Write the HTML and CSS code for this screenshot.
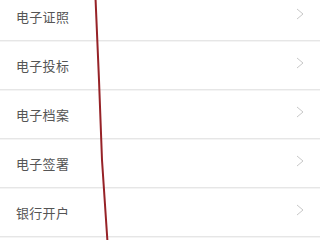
FILE: index.html
```html
<!DOCTYPE html>
<html lang="zh">
<head>
<meta charset="utf-8">
<link rel="stylesheet" href="styles.css">
</head>
<body>
<div class="screen">
  <ul class="menu">
    <li class="row"><span class="label">电子证照</span><svg class="chev" viewBox="0 0 8 12"><polyline points="1,1 7,6 1,11"/></svg></li>
    <li class="row"><span class="label">电子投标</span><svg class="chev" viewBox="0 0 8 12"><polyline points="1,1 7,6 1,11"/></svg></li>
    <li class="row"><span class="label">电子档案</span><svg class="chev" viewBox="0 0 8 12"><polyline points="1,1 7,6 1,11"/></svg></li>
    <li class="row"><span class="label">电子签署</span><svg class="chev" viewBox="0 0 8 12"><polyline points="1,1 7,6 1,11"/></svg></li>
    <li class="row"><span class="label">银行开户</span><svg class="chev" viewBox="0 0 8 12"><polyline points="1,1 7,6 1,11"/></svg></li>
  </ul>
  <svg class="stroke" viewBox="0 0 320 240"><path d="M95.5,-2 L99,80 L102,160 L107.5,242"/></svg>
</div>
</body>
</html>
```
FILE: styles.css
```css
html, body {
  margin: 0;
  padding: 0;
  background: #ffffff;
}
.screen {
  position: relative;
  width: 320px;
  height: 240px;
  overflow: hidden;
  font-family: "Noto Sans CJK SC", "Noto Sans", sans-serif;
}
.menu {
  list-style: none;
  margin: -8px 0 0 0;
  padding: 0;
}
.row {
  display: flex;
  align-items: center;
  justify-content: space-between;
  height: 48px;
  padding: 0 16px 0 16px;
  border-bottom: 1px solid #e6e6e6;
  box-shadow: 0 1px 0 #f4f4f4;
}
.label {
  font-size: 13px;
  color: #555555;
  letter-spacing: 0.3px;
}
.chev {
  width: 8px;
  height: 12px;
  margin-top: -4px;
}
.chev polyline {
  fill: none;
  stroke: #c8c8c8;
  stroke-width: 1;
}
.stroke {
  position: absolute;
  left: 0;
  top: 0;
  width: 320px;
  height: 240px;
}
.stroke path {
  fill: none;
  stroke: #962227;
  stroke-width: 2;
}
```
